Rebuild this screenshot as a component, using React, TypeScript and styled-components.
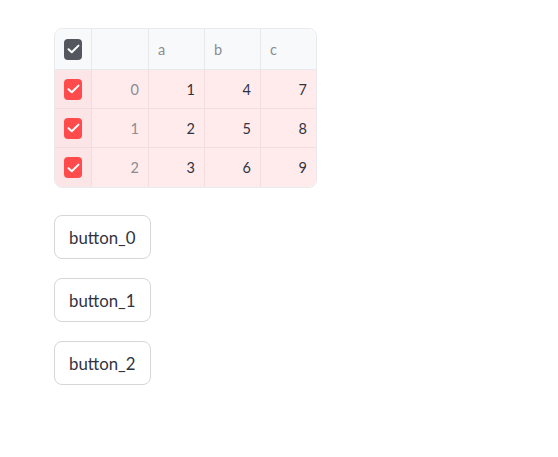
import styled, { createGlobalStyle } from "styled-components";

/**
 * Styles
 */
const Global = createGlobalStyle`
  body {
    margin: 0;
    background: #ffffff;
    font-family: "Source Sans Pro", Lato, "Noto Sans", sans-serif;
    color: #31333f;
  }
`;

const Page = styled.div`
  padding: 28px 0 0 54px;
  display: flex;
  flex-direction: column;
  align-items: flex-start;
`;

const Grid = styled.div`
  display: grid;
  grid-template-columns: 37px 57px 56px 56px 55px;
  grid-template-rows: 41px 39px 39px 39px;
  border: 1px solid #e9eaee;
  border-radius: 8px;
  overflow: hidden;
  margin-bottom: 27px;
`;

const Cell = styled.div<{ $head?: boolean; $index?: boolean; $picker?: boolean; $align?: string }>`
  display: flex;
  align-items: center;
  justify-content: ${(p) => p.$align || "flex-end"};
  padding: 0 9px;
  font-size: 14.5px;
  box-sizing: border-box;
  border-right: 1px solid ${(p) => (p.$head ? "#e8e9ed" : "#f2dcdd")};
  border-bottom: 1px solid ${(p) => (p.$head ? "#e8e9ed" : "#f2dcdd")};
  background: ${(p) =>
    p.$head ? "#f8f9fb" : p.$picker ? "#fbe5e6" : "#ffebeb"};
  color: ${(p) => (p.$head || p.$index ? "#8b8c94" : "#31333f")};

  &:nth-child(5n) {
    border-right: none;
  }
  &:nth-last-child(-n + 5) {
    border-bottom: none;
  }
`;

const Check = styled.div<{ $tone: string }>`
  width: 21px;
  height: 21px;
  border-radius: 4px;
  background: ${(p) => p.$tone};
  display: flex;
  align-items: center;
  justify-content: center;
`;

const Button = styled.button`
  height: 44px;
  padding: 0 14px;
  margin-bottom: 19px;
  border: 1px solid #d6d6d9;
  border-radius: 8px;
  background: #ffffff;
  color: #31333f;
  font-family: inherit;
  font-size: 16.8px;
  cursor: pointer;
`;

const Tick = () => (
  <svg width="13" height="10" viewBox="0 0 13 10" fill="none">
    <path
      d="M1.5 5.2 L4.8 8.3 L11.5 1.6"
      stroke="#ffffff"
      strokeWidth="2"
      strokeLinecap="round"
      strokeLinejoin="round"
    />
  </svg>
);

export default function App() {
  const rows = [
    [1, 4, 7],
    [2, 5, 8],
    [3, 6, 9],
  ];

  return (
    <Page>
      <Global />
      <Grid>
        <Cell $head $align="center">
          <Check $tone="#55575f">
            <Tick />
          </Check>
        </Cell>
        <Cell $head />
        <Cell $head $align="flex-start">a</Cell>
        <Cell $head $align="flex-start">b</Cell>
        <Cell $head $align="flex-start">c</Cell>
        {rows.map((row, i) => [
          <Cell key={`p${i}`} $picker $align="center">
            <Check $tone="#ff4b4b">
              <Tick />
            </Check>
          </Cell>,
          <Cell key={`i${i}`} $index>
            {i}
          </Cell>,
          ...row.map((v, j) => <Cell key={`${i}-${j}`}>{v}</Cell>),
        ])}
      </Grid>
      {[0, 1, 2].map((n) => (
        <Button key={n}>button_{n}</Button>
      ))}
    </Page>
  );
}
